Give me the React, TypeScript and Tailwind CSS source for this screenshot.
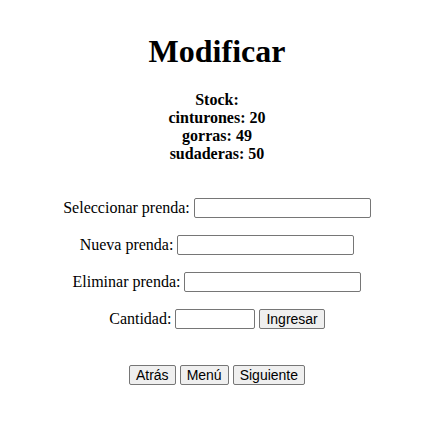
export default function App() {
  const stock = [
    ["cinturones", 20],
    ["gorras", 49],
    ["sudaderas", 50],
  ];

  const inputCls =
    "h-[20px] rounded-[2px] border border-[#767676] bg-white px-[2px] text-[13.33px] outline-none";
  const btnCls =
    "h-[20px] rounded-[2px] border border-[#767676] bg-[#efefef] px-[6px] text-[14px] leading-none text-black [font-family:'Liberation_Sans',Arial,sans-serif]";

  return (
    <div className="min-h-[439px] w-[444px] bg-white text-black [font-family:'Liberation_Serif',serif]">
      <div className="flex w-[434px] flex-col items-center pt-[33px]">
        <h1 className="text-[32px] font-bold leading-[37px]">Modificar</h1>

        <div className="mt-[21px] flex flex-col items-center text-[16px] font-bold leading-[18px]">
          <span>Stock:</span>
          {stock.map(([name, qty]) => (
            <span key={name}>
              {name}: {qty}
            </span>
          ))}
        </div>

        <div className="mt-[35px] flex flex-col items-center gap-[17px] text-[16px] leading-[20px]">
          <div className="flex items-center gap-[4px]">
            <label>Seleccionar prenda:</label>
            <input type="text" className={`${inputCls} w-[177px]`} />
          </div>
          <div className="flex items-center gap-[4px]">
            <label>Nueva prenda:</label>
            <input type="text" className={`${inputCls} w-[177px]`} />
          </div>
          <div className="flex items-center gap-[4px]">
            <label>Eliminar prenda:</label>
            <input type="text" className={`${inputCls} w-[177px]`} />
          </div>
          <div className="flex items-center gap-[4px]">
            <label>Cantidad:</label>
            <input type="text" className={`${inputCls} w-[80px]`} />
            <button className={btnCls}>Ingresar</button>
          </div>
        </div>

        <div className="mt-[36px] flex items-center gap-[4px]">
          <button className={btnCls}>Atrás</button>
          <button className={btnCls}>Menú</button>
          <button className={btnCls}>Siguiente</button>
        </div>
      </div>
    </div>
  );
}
